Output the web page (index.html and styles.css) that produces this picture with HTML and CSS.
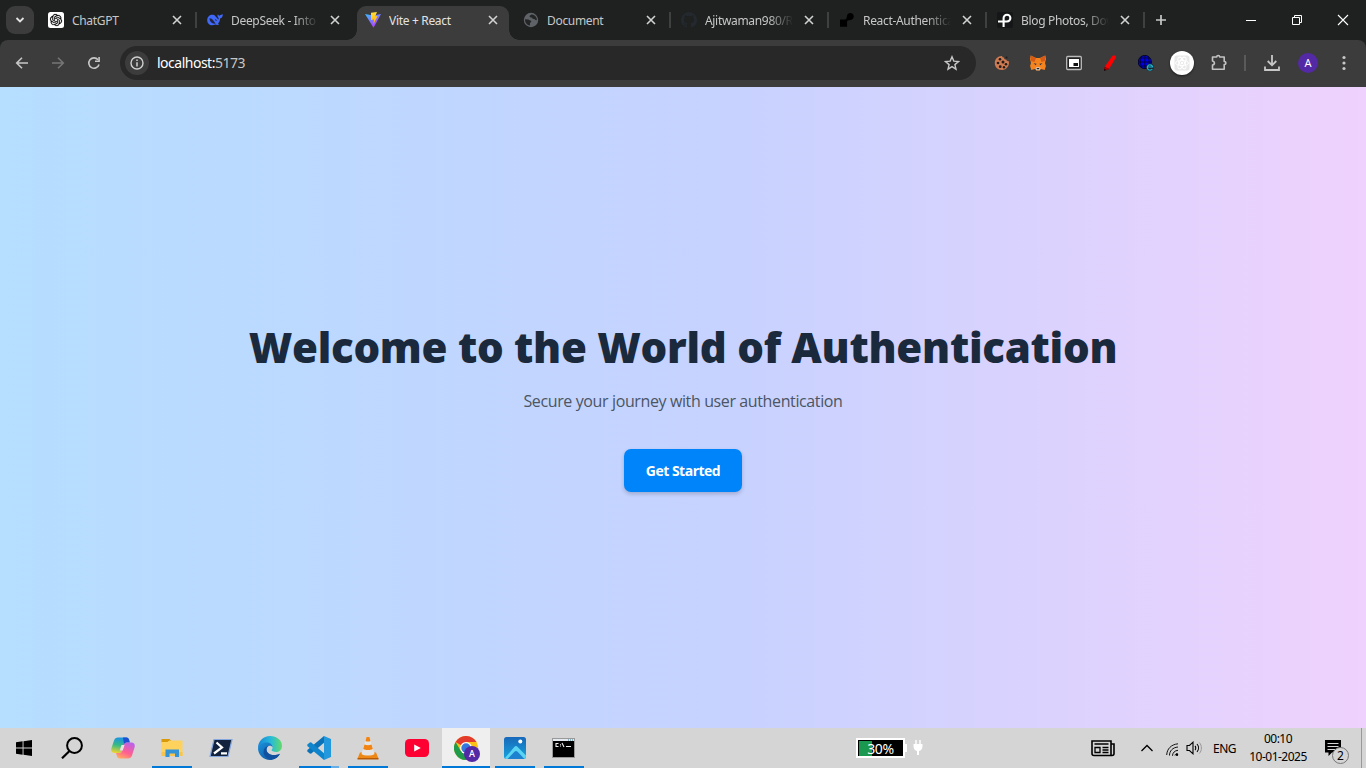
FILE: index.html
```html
<!DOCTYPE html>
<html lang="en">
<head>
<meta charset="utf-8">
<title>Vite + React</title>
<link rel="stylesheet" href="styles.css">
</head>
<body>
<div class="screen">
  <header class="tabstrip">
    <div class="tab-search"><svg width="10" height="10" viewBox="0 0 10 10"><path d="M1.5 3l3.5 3.5L8.5 3" fill="none" stroke="#e3e3e3" stroke-width="1.8"/></svg></div>
    <div class="tabs">
      <div class="tab"><svg class="fav" viewBox="0 0 16 16"><rect width="16" height="16" rx="2.5" fill="#fff"/><path transform="translate(2 2) scale(.5)" fill="#000" stroke="#000" stroke-width=".4" d="M22.2819 9.8211a5.9847 5.9847 0 0 0-.5157-4.9108 6.0462 6.0462 0 0 0-6.5098-2.9A6.0651 6.0651 0 0 0 4.9807 4.1818a5.9847 5.9847 0 0 0-3.9977 2.9 6.0462 6.0462 0 0 0 .7427 7.0966 5.98 5.98 0 0 0 .511 4.9107 6.051 6.051 0 0 0 6.5146 2.9001A5.9847 5.9847 0 0 0 13.2599 24a6.0557 6.0557 0 0 0 5.7718-4.2058 5.9894 5.9894 0 0 0 3.9977-2.9001 6.0557 6.0557 0 0 0-.7475-7.0729zm-9.022 12.6081a4.4755 4.4755 0 0 1-2.8764-1.0408l.1419-.0804 4.7783-2.7582a.7948.7948 0 0 0 .3927-.6813v-6.7369l2.02 1.1686a.071.071 0 0 1 .038.052v5.5826a4.504 4.504 0 0 1-4.4945 4.4944zm-9.6607-4.1254a4.4708 4.4708 0 0 1-.5346-3.0137l.142.0852 4.783 2.7582a.7712.7712 0 0 0 .7806 0l5.8428-3.3685v2.3324a.0804.0804 0 0 1-.0332.0615L9.74 19.9502a4.4992 4.4992 0 0 1-6.1408-1.6464zM2.3408 7.8956a4.485 4.485 0 0 1 2.3655-1.9728V11.6a.7664.7664 0 0 0 .3879.6765l5.8144 3.3543-2.0201 1.1685a.0757.0757 0 0 1-.071 0l-4.8303-2.7865A4.504 4.504 0 0 1 2.3408 7.872zm16.5963 3.8558L13.1038 8.364 15.1192 7.2a.0757.0757 0 0 1 .071 0l4.8303 2.7913a4.4944 4.4944 0 0 1-.6765 8.1042v-5.6772a.79.79 0 0 0-.407-.667zm2.0107-3.0231l-.142-.0852-4.7735-2.7818a.7759.7759 0 0 0-.7854 0L9.409 9.2297V6.8974a.0662.0662 0 0 1 .0284-.0615l4.8303-2.7866a4.4992 4.4992 0 0 1 6.6802 4.66zM8.3065 12.863l-2.02-1.1638a.0804.0804 0 0 1-.038-.0567V6.0742a4.4992 4.4992 0 0 1 7.3757-3.4537l-.142.0805L8.704 5.459a.7948.7948 0 0 0-.3927.6813zm1.0976-2.3654l2.602-1.4998 2.6069 1.4998v2.9994l-2.5974 1.4997-2.6067-1.4997Z"/></svg><span class="title">ChatGPT</span><svg class="x" viewBox="0 0 10 10"><path d="M1 1l8 8M9 1L1 9"/></svg></div>
      <div class="tab"><svg class="fav" viewBox="0 0 16 16"><path d="M.2 8C.3 4.300 3 2.300 6.300 2.700c.9.1 1.500.9 2.300 1.700 1 .8 2 1.900 2.700 3 .8-.4.1-1.700-.5-2.400-.6-.8-.3-2 .2-2.700.3 1 .8 1.300 1.700 1.400.9-1 2-.9 3.100-1.400.1 2.400-.9 3.700-2.700 4.100-.1 2.200-.9 3.800-2.100 5l1.200.9c-1.300 1-2.700.7-3.900.2C4.200 14.400.1 12.500.2 8z" fill="#4169f8"/><path d="M2.500 6.300c2.700-.4 4.700 3.600 6.300 5.300-3.500.8-6.300-1.800-6.300-5.300zm5.400.9c1-.3 1.800.7 2 1.700-.9.100-1.800-.8-2-1.700z" fill="#1f2744"/></svg><span class="title fade">DeepSeek - Into the</span><svg class="x" viewBox="0 0 10 10"><path d="M1 1l8 8M9 1L1 9"/></svg></div>
      <div class="tab active"><svg class="fav" viewBox="0 0 16 16"><defs><linearGradient id="vite" x1="0" y1="0" x2=".7" y2="1"><stop stop-color="#38bdff"/><stop offset="1" stop-color="#bd34fe"/></linearGradient><linearGradient id="bolt" x1="0" y1="0" x2="0" y2="1"><stop stop-color="#ffdf3d"/><stop offset="1" stop-color="#ffa800"/></linearGradient></defs><path d="M0 2l8 1.500L16 2 8.500 15.700z" fill="url(#vite)"/><path d="M6 .7L12 0l-1.800 4.300 2.400-.3-4.200 8.200.6-4.700-3 .5z" fill="url(#bolt)"/></svg><span class="title">Vite + React</span><svg class="x" viewBox="0 0 10 10"><path d="M1 1l8 8M9 1L1 9"/></svg></div>
      <div class="tab"><svg class="fav" viewBox="0 0 16 16"><circle cx="8" cy="8" r="7.200" fill="#5f6368"/><path d="M2 7.300l3.300.2c1 .1 1.200 1 2.200 1.100 1 .1 1 1.300.3 1.700l-.8.7v2.500C4 13.300 1.900 10.700 2 7.300zM8.500 2.500C7.300 3 6.300 3.800 6.700 4.800c.5 1 1.700.3 2.300 1.200.5.900 1.300.9 2.200.9l1.300 1.100 1.400.2C14 5 11.700 2.500 8.500 2.500z" fill="#242626"/></svg><span class="title">Document</span><svg class="x" viewBox="0 0 10 10"><path d="M1 1l8 8M9 1L1 9"/></svg></div>
      <div class="tab"><svg class="fav" viewBox="0 0 16 16"><path fill="#24292f" d="M8 0a8 8 0 0 0-2.530 15.590c.4.070.55-.17.55-.38v-1.490c-2.230.48-2.690-.94-2.690-.94-.36-.93-.89-1.170-.89-1.170-.73-.5.06-.49.06-.49.8.060 1.220.82 1.220.82.720 1.230 1.880.87 2.340.67.070-.52.28-.88.51-1.080C4.790 11.330 2.920 10.640 2.920 7.580c0-.88.31-1.590.82-2.150-.08-.2-.36-1.020.08-2.120 0 0 .67-.21 2.200.82a7.500 7.500 0 0 1 4 0c1.530-1.040 2.200-.82 2.200-.82.440 1.100.16 1.920.08 2.120.51.56.82 1.270.82 2.150 0 3.070-1.870 3.750-3.650 3.950.29.25.54.73.54 1.480v2.200c0 .21.15.46.55.38A8 8 0 0 0 8 0z"/></svg><span class="title fade">Ajitwaman980/React</span><svg class="x" viewBox="0 0 10 10"><path d="M1 1l8 8M9 1L1 9"/></svg></div>
      <div class="tab"><svg class="fav" viewBox="0 0 16 16"><path d="M1 7.500h4c3 0 2.500-2.300 3.100-4.100.9-3 5.300-3.200 6.400-.3 1 3.200-1.200 5.100-3.700 5.100-3 0-2.700 1.200-2.700 3v3.500H1z" fill="#000"/></svg><span class="title fade">React-Authentication</span><svg class="x" viewBox="0 0 10 10"><path d="M1 1l8 8M9 1L1 9"/></svg></div>
      <div class="tab"><svg class="fav" viewBox="0 0 16 16"><rect width="16" height="16" rx="2" fill="#151617"/><path d="M1 9.500h9a3.400 3.400 0 1 0-3.400-3.400V15" fill="none" stroke="#fff" stroke-width="2.100"/></svg><span class="title fade">Blog Photos, Download</span><svg class="x" viewBox="0 0 10 10"><path d="M1 1l8 8M9 1L1 9"/></svg></div>
    </div>
    <svg class="plus" viewBox="0 0 12 12"><path d="M6 1v10M1 6h10" stroke="#c7c7c7" stroke-width="1.700"/></svg>
    <div class="winctl">
      <svg viewBox="0 0 46 40"><path d="M18 20.500h10" stroke="#fff"/></svg>
      <svg viewBox="0 0 46 40"><path d="M18.500 17.500h7v7h-7zM20.500 17.500v-2h7v7h-2" fill="none" stroke="#fff"/></svg>
      <svg viewBox="0 0 46 40"><path d="M18 15l10 10M28 15L18 25" stroke="#fff" stroke-width="1.100"/></svg>
    </div>
  </header>

  <div class="toolbar">
    <div class="nav">
      <svg viewBox="0 0 16 16"><path d="M14 8H3M8 2.700L2.700 8 8 13.300" fill="none" stroke="#c7c7c7" stroke-width="1.600"/></svg>
      <svg viewBox="0 0 16 16"><path d="M2 8h11M8 2.700L13.300 8 8 13.300" fill="none" stroke="#757575" stroke-width="1.600"/></svg>
      <svg viewBox="0 0 16 16"><path d="M13 9.500A5.200 5.200 0 1 1 12 4.700" fill="none" stroke="#c7c7c7" stroke-width="1.600"/><path d="M13.900 2v5H9V5.500h3.300V2z" fill="#c7c7c7"/></svg>
    </div>
    <div class="omnibox">
      <div class="info"><svg width="14" height="14" viewBox="0 0 14 14"><circle cx="7" cy="7" r="6" fill="none" stroke="#d0d0d0" stroke-width="1.400"/><path d="M7 6.200v4.300M7 3.500v1.500" stroke="#d0d0d0" stroke-width="1.500"/></svg></div>
      <span class="url">localhost:<i>5173</i></span>
      <svg class="star" viewBox="0 0 16 16"><path d="M8 1.800l1.800 4.300 4.700.4-3.600 3.100 1.100 4.600L8 11.700l-4 2.500 1.100-4.600L1.500 6.500l4.700-.4z" fill="none" stroke="#c7c7c7" stroke-width="1.400"/></svg>
    </div>
    <div class="extensions">
      <div class="ext"><svg width="16" height="16" viewBox="0 0 16 16"><path d="M8 1c.3 1 1 1.500 2 1.500 0 1.500 1 2.200 2.200 2 .3 1 1.300 1.800 2.500 1.600C16 10.500 12.500 15 8 15S.8 12 .8 8 4 .8 8 1z" fill="#d07a51"/><g fill="#201c19"><circle cx="6" cy="4.200" r="1.300"/><circle cx="9" cy="7" r="1.500"/><circle cx="4" cy="8" r="1.300"/><circle cx="12" cy="9.200" r="1.300"/><circle cx="6.200" cy="11.700" r="1.400"/><circle cx="10" cy="12.300" r="1.200"/><circle cx="12.500" cy="2.500" r="1"/></g></svg></div>
      <div class="ext"><svg width="16" height="16" viewBox="0 0 16 16"><path d="M.7.600L6 3h4L15.300.600 16 4l-1 4 .9 3-1.200 4-3.700-.9L9.700 15.500H6.300L5 14.100 1.300 15 .1 11 1 8 0 4z" fill="#f5841f"/><path d="M.7.600L6 3 4.500 7 .8 6zM15.300.600L10 3l1.500 4 3.700-1z" fill="#d65b17"/><path d="M3.500 8.300l3 .5-.7 1.500zM12.500 8.300l-3 .5.700 1.500z" fill="#233447"/><path d="M5.500 13l1-.8h3l1 .8-.8 2.300H6.300z" fill="#d9cfc5"/><path d="M6.600 13h2.800l-.3 1.200H6.900z" fill="#222"/></svg></div>
      <div class="ext"><svg width="16" height="16" viewBox="0 0 16 16"><rect x=".7" y="1.500" width="14.600" height="13" rx="1" fill="#222" stroke="#bbb" stroke-width="1.300"/><rect x="3" y="4" width="10" height="8" fill="#fff"/><rect x="7.500" y="8" width="4.500" height="3" fill="#111"/></svg></div>
      <div class="ext"><svg width="16" height="16" viewBox="0 0 16 16"><path d="M10.500.8c2-1 4 .3 3.400 1.700L7 14l-4.400-2z" fill="#f00"/><path d="M2.600 12L7 14l-5 2z" fill="#1a0000"/><path d="M2.600 12L7 14l-2 .9-2.600-1z" fill="#b00"/></svg></div>
      <div class="ext"><svg width="16" height="16" viewBox="0 0 16 16"><circle cx="6.800" cy="7" r="6.600" fill="#0000e8" stroke="#050525"/><path d="M.5 7h12.600M6.800.5v13M2 3h9.600M2 11h8M4 1.200c-2 3.500-2 8 0 11.500M9.600 1.200c2 3.500 2 8 0 11.500" fill="none" stroke="#050525" stroke-width=".8"/><circle cx="12" cy="12.200" r="3.800" fill="#13282e"/><path d="M14.300 14A2.700 2.700 0 1 1 14.700 12H10" fill="none" stroke="#20b7d8" stroke-width="1.200"/></svg></div>
      <div class="ext"><svg class="react" width="24" height="24" viewBox="0 0 24 24"><circle cx="12" cy="12" r="12" fill="#fff"/><rect x="4.500" y="4.500" width="15" height="15" rx="2" fill="#e8e8e8"/><g fill="none" stroke="#fff" stroke-width="1"><ellipse cx="12" cy="12" rx="6.500" ry="2.600"/><ellipse cx="12" cy="12" rx="6.500" ry="2.600" transform="rotate(60 12 12)"/><ellipse cx="12" cy="12" rx="6.500" ry="2.600" transform="rotate(120 12 12)"/></g><circle cx="12" cy="12" r="1.300" fill="#fff"/></svg></div>
      <div class="ext puzzle"><svg width="18" height="18" viewBox="0 0 18 18"><path d="M2.500 3h4.200c0-2 3-2 3 0h4.500v4.500c2.300 0 2.300 3 0 3v4.700H2.500V11c2.600-.2 2.600-3.600 0-4z" fill="none" stroke="#c2c2c2" stroke-width="1.600" stroke-linejoin="round"/></svg></div>
    </div>
    <div class="divider"></div>
    <svg class="download" viewBox="0 0 18 18"><path d="M9 1v10M4.700 7L9 11.300 13.300 7M2 12.500V16h14v-3.500" fill="none" stroke="#c7c7c7" stroke-width="1.800"/></svg>
    <div class="avatar">A</div>
    <svg class="dots" viewBox="0 0 4 16"><g fill="#c7c7c7"><circle cx="2" cy="2.500" r="1.600"/><circle cx="2" cy="8" r="1.600"/><circle cx="2" cy="13.500" r="1.600"/></g></svg>
  </div>

  <main class="page">
    <h1>Welcome to the World of Authentication</h1>
    <p>Secure your journey with user authentication</p>
    <button class="cta">Get Started</button>
  </main>

  <footer class="taskbar">
    <div class="cell start"><svg width="16" height="16" viewBox="0 0 16 16"><path d="M0 2.300L6.600 1.300v6.200H0zM7.500 1.200L16 0v7.500H7.500zM0 8.400h6.600v6.300L0 13.700zM7.500 8.400H16V16l-8.500-1.200z"/></svg></div>
    <div class="cell find"><svg width="22" height="22" viewBox="0 0 22 22"><circle cx="13.500" cy="8.500" r="7.400" fill="none" stroke="#000" stroke-width="2"/><path d="M8.500 14L1 21.300" stroke="#000" stroke-width="2.200"/></svg></div>
    <div class="cell"><svg width="24" height="24" viewBox="0 0 24 24"><defs><linearGradient id="cpa" x1=".5" y1="0" x2=".3" y2="1"><stop stop-color="#1a91e8"/><stop offset=".5" stop-color="#35ba85"/><stop offset="1" stop-color="#efd332"/></linearGradient><linearGradient id="cpb" x1=".7" y1="0" x2=".2" y2="1"><stop stop-color="#bb62e8"/><stop offset=".55" stop-color="#ff5e92"/><stop offset="1" stop-color="#ffad61"/></linearGradient></defs><path d="M7 1.500h8.500c1.500 0 2.200 1 2.600 2.500l.7 2.500h-3c-1.500 0-2.200.8-2.700 2.200L11 15c-.4 1.200-1.200 2-2.700 2H3.500C.5 17-.3 14.500.5 12L3 4.500C3.700 2.500 5 1.500 7 1.500z" fill="url(#cpa)"/><path d="M12 1.500h3.500c1.500 0 2.200 1 2.600 2.500l.7 2.500h-3c-1.500 0-2.200.8-2.700 2z" fill="#1c4fd1"/><path d="M17 22.500H8.500c-1.500 0-2.200-1-2.600-2.500L5 17h3.300c1.500 0 2.300-.8 2.700-2l2-6.300c.5-1.500 1.300-2.200 2.800-2.200h4.700c3 0 3.800 2.500 3 5L21 19.500c-.7 2-2 3-4 3z" fill="url(#cpb)"/><path d="M10.500 9l-1.800 5.500h3.100L13.600 9z" fill="#e4e4e4"/></svg></div>
    <div class="cell run"><svg width="22" height="20" viewBox="0 0 22 20"><path d="M.5 1h8l2 2h-2L6 4.500H.5z" fill="#d89a0b"/><path d="M.5 4h6l2-1.500h13V18H.5z" fill="#ffd25d"/><path d="M.5 14h21v4H.5z" fill="#f8c44b"/><path d="M4.500 19v-7.500h13.500V19H14v-3.500H8.500V19z" fill="#3293d6"/></svg></div>
    <div class="cell"><svg width="24" height="20" viewBox="0 0 24 20"><path d="M5 1.500h18L19 18.500H1z" fill="#13233e" stroke="#86a7dd" stroke-width="1.200"/><path d="M7.500 4.500l5.500 5-8 6M12 15.300h6" fill="none" stroke="#fff" stroke-width="2.200"/></svg></div>
    <div class="cell"><svg width="24" height="24" viewBox="0 0 24 24"><defs><linearGradient id="ed1"><stop stop-color="#1685d9"/><stop offset=".55" stop-color="#28bcd8"/><stop offset="1" stop-color="#65da66"/></linearGradient><linearGradient id="ed2" x1="0" y1="0" x2="1" y2="1"><stop stop-color="#1b91da"/><stop offset="1" stop-color="#0c4a98"/></linearGradient></defs><path d="M0 12C0 5 5.300 0 12 0c7 0 12 4.500 12 9.700 0 4-2.700 6.300-6 6.300-2.500 0-4.500-.8-4.500-1.900 0-.7 1.100-1 1.100-2.700C14.600 8.700 12 7 9 7c-4 0-7.600 2.300-9 5z" fill="url(#ed1)"/><path d="M0 12c1-3.500 4.500-5.500 8.500-5.500 3.500 0 6.100 2 6.100 4.900-.4-1-1.500-1.600-2.700-1.600-2.200 0-3.400 2-3.400 3.700 0 4.500 6.500 7.500 13.500 4.200C20 21.500 16.500 24 12 24 5.300 24 0 18.700 0 12z" fill="url(#ed2)"/><path d="M8.500 13.500c0 4.500 6.500 7.500 13.500 4.200-1.700 3.300-5 5.300-8.500 5.300C8.500 23 5.500 19.500 5.500 16c0-3 2-5.500 5-6-1.300.7-2 2-2 3.500z" fill="#114f9f"/></svg></div>
    <div class="cell run code"><svg width="24" height="24" viewBox="0 0 24 24"><path d="M17 0l7 3v18l-7 3z" fill="#2498dc"/><path d="M17 0v6.800L4 17.700l-1.200-.1L.3 15.500V14z" fill="#0c72b8"/><path d="M17 24v-6.800L4 6.300l-1.200.1L.3 8.500V10z" fill="#0d84cc"/></svg></div>
    <div class="cell run"><svg width="22" height="24" viewBox="0 0 22 24"><path d="M3 16.500h16l2.500 6h-21z" fill="#ef8715"/><path d="M.5 22h21v1.500H.5z" fill="#b85b06"/><path d="M9.500 1h3L17.500 18c-2.500 2-10.500 2-13 0z" fill="#e4e4e4"/><path d="M9.500 1h3l1 4c-1 .7-4 .7-5 0zM7.500 8.500c2 1 5 1 7 0l1.300 4.500c-2.500 1.400-7 1.400-9.600 0z" fill="#f28413"/></svg></div>
    <div class="cell"><svg width="24" height="18" viewBox="0 0 24 18"><rect width="24" height="18" rx="4.500" fill="#ff0033"/><path d="M9.200 5.500v7L15.800 9z" fill="#fff"/></svg></div>
    <div class="cell run chrome"><svg width="26" height="26" viewBox="0 0 26 26"><circle cx="12" cy="12" r="12" fill="#fbc116"/><path d="M12 12L1.600 6A12 12 0 0 1 22.400 6H12z" fill="#e33b2e"/><path d="M12 12l5.200 3L12 24A12 12 0 0 1 1.600 6l5.200 9z" fill="#209b4b"/><circle cx="12" cy="12" r="5.900" fill="#fff"/><circle cx="12" cy="12" r="4.700" fill="#3478df"/><circle cx="18" cy="18" r="8" fill="#5429a6"/></svg><b>A</b></div>
    <div class="cell run"><svg width="22" height="22" viewBox="0 0 22 22"><defs><linearGradient id="ph" x1="0" y1="0" x2="0" y2="1"><stop stop-color="#1768ba"/><stop offset="1" stop-color="#17a3dd"/></linearGradient></defs><rect width="22" height="22" rx="2.500" fill="url(#ph)"/><path d="M1 21L10.500 9.800c.9-1 2-1 2.900 0L22 18.500c0 2-.9 3.500-2.500 3.500H2z" fill="#59d4f3"/><path d="M3.500 22l7.200-7.500c.8-.8 1.800-.8 2.600 0L20.500 22z" fill="#1d82cf"/><circle cx="16.300" cy="4.500" r="2" fill="#fff"/></svg></div>
    <div class="cell run"><svg width="23" height="20" viewBox="0 0 23 20"><rect x=".5" y=".5" width="22" height="19" fill="#000" stroke="#999"/><path d="M1 1h21v2H1z" fill="#e5eaf0"/><path d="M16 2h1M18 2h1M20 2h1" stroke="#378"/><path d="M6.500 5.500H4v3h2.500M8.500 6v.8M8.500 7.500v1M10 5l2 4M14 8.500h5" fill="none" stroke="#eee" stroke-width="1.100"/></svg></div>
    <div class="battery"><div class="level"></div><span>30%</span></div>
    <svg class="plug" viewBox="0 0 10 16"><path d="M2.300 0h1.400v4h2.600V0h1.400v4H9.500v2c0 3-1.500 4.500-3.500 5v4H4v-4C2 10.500.5 9 .5 6V4h1.800z" fill="#fff"/></svg>
    <div class="tray">
      <svg class="news" viewBox="0 0 24 17"><path d="M1 1h19v14.500H3c-1.300 0-2-.7-2-2zM20 4h3v9.500c0 1.300-.7 2-2 2h-1" fill="none" stroke="#000" stroke-width="1.600"/><path d="M3.500 4h14M11.500 7.500h6M11.500 10h6M11.500 12.500h6M4 7.500h5v5H4z" fill="none" stroke="#000" stroke-width="1.300"/></svg>
      <svg class="chev" viewBox="0 0 12 8"><path d="M.5 7L6 1.500 11.500 7" fill="none" stroke="#000" stroke-width="1.300"/></svg>
      <svg class="wifi" viewBox="0 0 13 13"><g fill="none" stroke="#111"><path d="M.7 12C1 6 5 1.500 12 .8M3.500 12.500C3.500 8 6.500 4.500 12 4M6.500 12.800c0-3 2.300-5.300 5.500-5.500"/><path d="M9 12.500c.2-1.200 1.200-2 2.500-2"/></g><circle cx="11" cy="11.800" r="1.200"/></svg>
      <svg class="vol" viewBox="0 0 17 14"><path d="M1 4.500h2.500L7 1.200v11.600L3.500 9.500H1zM9 5c1 1 1 3 0 4M11 3c2 2.300 2 5.700 0 8" fill="none" stroke="#000" stroke-width="1.100"/><path d="M13.300 1.500c2.800 3 2.800 8 0 11" fill="none" stroke="#999"/></svg>
      <span class="lang">ENG</span>
      <div class="clock"><span>00:10</span><span class="date">10-01-2025</span></div>
      <div class="notif"><svg width="16" height="16" viewBox="0 0 16 16"><path d="M0 0h16v12.500H7L3.500 16v-3.500H0z"/><path d="M2.500 3.500h11M2.500 6.500h11M2.500 9.500h8" stroke="#d5d5d5"/></svg><span class="badge">2</span></div>
      <div class="peek"></div>
    </div>
  </footer>
</div>
</body>
</html>
```
FILE: styles.css
```css
* { box-sizing: border-box; }
body { margin: 0; font-family: "Noto Sans", "Open Sans", sans-serif; }
svg { display: block; flex: none; }
.screen { width: 1366px; height: 768px; display: flex; flex-direction: column; overflow: hidden; background: #1f2120; }

.tabstrip { height: 40px; flex: none; display: flex; align-items: center; background: #1f2120; }
.tab-search { width: 28px; height: 28px; margin: 0 4px 0 6px; border-radius: 9px; background: #3c3c3c; display: flex; align-items: center; justify-content: center; }
.tabs { display: flex; align-self: stretch; }
.tab { width: 158px; height: 40px; padding: 0 14px 0 11px; display: flex; align-items: center; position: relative; color: #c7c7c7; font-size: 12px; }
.tab:first-child { padding-left: 10px; }
.tab::after { content: ""; position: absolute; right: -1px; top: 12px; width: 2px; height: 16px; background: #3f4040; }
.tab:nth-child(2)::after, .tab.active::after { display: none; }
.fav { width: 16px; height: 16px; }
.title { width: 88px; margin-left: 8px; padding-top: 2px; overflow: hidden; white-space: nowrap; line-height: 20px; font-size: 12px; letter-spacing: -0.32px; }
.fade { -webkit-mask-image: linear-gradient(to right, #000 72%, transparent); mask-image: linear-gradient(to right, #000 72%, transparent); }
.x { width: 10px; height: 10px; margin-left: auto; fill: none; stroke: #d2d2d2; stroke-width: 1.6; }
.tab.active { width: 152px; height: 34px; margin: 6px 3px 0; padding: 0 11px 6px 8px; border-radius: 9px 9px 0 0; background: #3c3c3c; color: #e3e3e3; }
.tab.active::before { content: ""; position: absolute; left: -10px; right: -10px; bottom: 0; height: 10px; background: radial-gradient(circle at 0 0, transparent 9.5px, #3c3c3c 10px) left / 10px 10px no-repeat, radial-gradient(circle at 100% 0, transparent 9.5px, #3c3c3c 10px) right / 10px 10px no-repeat; }
.plus { width: 12px; height: 12px; margin-left: 11px; }
.winctl { margin-left: auto; display: flex; }
.winctl svg { width: 46px; height: 40px; }

.toolbar { height: 47px; flex: none; display: flex; align-items: center; background: #3c3c3c; border-radius: 8px 8px 0 0; padding-bottom: 1px; }
.nav { width: 120px; display: flex; gap: 20px; padding-left: 14px; }
.nav svg { width: 16px; height: 16px; }
.omnibox { width: 856px; height: 34px; border-radius: 17px; background: #282828; display: flex; align-items: center; padding: 0 16px 0 5px; }
.info { width: 24px; height: 24px; border-radius: 50%; background: #3c3c3c; display: flex; align-items: center; justify-content: center; }
.url { margin-left: 8px; font-size: 14px; line-height: 20px; letter-spacing: -0.5px; color: #fff; }
.url i { font-style: normal; color: #c7c7c7; }
.star { width: 16px; height: 16px; margin-left: auto; }
.extensions { display: flex; margin-left: 8px; }
.ext { width: 36px; height: 36px; display: flex; align-items: center; justify-content: center; }
.puzzle { padding-left: 2px; }
.react { filter: drop-shadow(0 1px 1px #0008); }
.divider { width: 2px; height: 16px; margin: 0 17px 0 8px; background: #5a5a5a; }
.download { width: 18px; height: 18px; }
.avatar { width: 20px; height: 20px; margin: 0 24px 0 17px; border-radius: 50%; background: #5429a6; color: #fff; font-size: 11px; line-height: 20px; text-align: center; }
.dots { width: 4px; height: 16px; }

.page { flex: 1; display: flex; flex-direction: column; align-items: center; padding-top: 230px; background: linear-gradient(to right, #b5deff, #c6d2ff 52%, #efd2fd); }
h1 { margin: 0; height: 60px; line-height: 60px; font-family: "Open Sans", sans-serif; font-size: 42px; font-weight: 800; letter-spacing: -0.28px; white-space: nowrap; color: #1a293b; }
p { margin: 12px 0 0; height: 24px; line-height: 24px; font-size: 16px; font-family: "Open Sans", sans-serif; letter-spacing: -0.38px; white-space: nowrap; color: #4b5563; }
.cta { width: 118px; height: 43px; margin-top: 36px; padding: 0; border: 0; border-radius: 7px; background: #0084fa; color: #fff; font: 700 14px "Open Sans", sans-serif; letter-spacing: -0.5px; white-space: nowrap; box-shadow: 0 2px 4px #0003; }

.taskbar { height: 40px; flex: none; display: flex; align-items: center; background: #d5d5d5; color: #000; }
.cell { width: 49px; height: 40px; flex: none; display: flex; align-items: center; justify-content: center; position: relative; }
.start { width: 48px; }
.find { width: 50px; padding-right: 3px; }
.run::after { content: ""; position: absolute; left: 5px; bottom: 0; width: 40px; height: 2px; background: #0078d7; }
.code::after { background: linear-gradient(to right, #0078d7 32px, #66aee8 32px); }
.chrome { background: #efefef; width: 48px; margin-left: 1px; }
.chrome svg { margin: 2px 0 0 2px; }
.chrome::after { left: 0; width: 48px; }
.chrome b { position: absolute; left: 23px; top: 18px; width: 14px; color: #fff; font-size: 9px; line-height: 16px; text-align: center; font-weight: 500; }
.battery { width: 49px; height: 20px; margin-left: 268px; border: 2px solid #fff; background: #000; display: flex; align-items: center; justify-content: center; position: relative; color: #fff; font-size: 14px; letter-spacing: -0.4px; }
.battery::after { content: ""; position: absolute; right: -4px; top: 4px; width: 2px; height: 8px; background: #fff; }
.level { position: absolute; left: 1px; top: 1px; bottom: 0; width: 13px; background: #1a9850; }
.battery span { position: relative; }
.plug { width: 10px; height: 16px; margin-left: 8px; }
.tray { margin-left: auto; height: 40px; display: flex; align-items: center; }
.news { width: 24px; height: 17px; margin-right: 26px; }
.chev { width: 12px; height: 8px; margin-right: 13px; }
.wifi { width: 13px; height: 13px; margin: 2px 7px 0 0; }
.vol { width: 17px; height: 14px; margin-right: 10px; }
.lang { width: 24px; font-size: 12px; letter-spacing: -0.5px; }
.clock { width: 58px; margin-left: 12px; display: flex; flex-direction: column; align-items: center; font-size: 12px; line-height: 18px; letter-spacing: -0.5px; white-space: nowrap; }
.notif { margin-left: 18px; width: 36px; height: 16px; position: relative; }
.badge { position: absolute; left: 7px; top: 7px; width: 17px; height: 17px; border: 1px solid #777; border-radius: 50%; background: #d5d5d5; font-size: 12px; line-height: 15px; text-align: center; }
.peek { width: 5px; height: 40px; border-left: 1px solid #999; }
```
